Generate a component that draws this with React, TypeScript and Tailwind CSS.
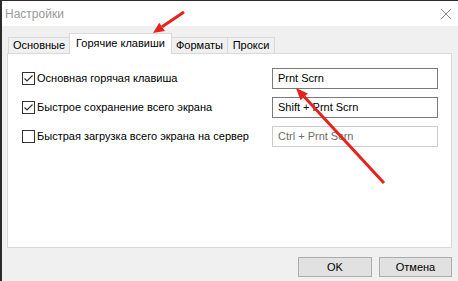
import React from "react";

const font = { fontFamily: '"Liberation Sans", Arial, sans-serif' };

const tabs = [
  { label: "Основные", w: "w-[62px]" },
  { label: "Горячие клавиши", w: "w-[103px]", active: true },
  { label: "Форматы", w: "w-[57px]" },
  { label: "Прокси", w: "w-[48px]" },
];

const rows = [
  { label: "Основная горячая клавиша", value: "Prnt Scrn", checked: true },
  { label: "Быстрое сохранение всего экрана", value: "Shift + Prnt Scrn", checked: true },
  { label: "Быстрая загрузка всего экрана на сервер", value: "Ctrl + Prnt Scrn", checked: false, disabled: true },
];

const Checkbox = ({ checked }: { checked: boolean }) => (
  <div className="h-[13px] w-[13px] shrink-0 border border-[#333333] bg-white">
    {checked && (
      <svg viewBox="0 0 11 11" className="h-[11px] w-[11px]">
        <path d="M1.5 5.5 L4 8 L9.5 2.5" fill="none" stroke="#333333" strokeWidth="1.2" />
      </svg>
    )}
  </div>
);

export default function App() {
  return (
    <div
      className="relative flex h-[281px] w-[458px] flex-col overflow-hidden whitespace-nowrap border-t border-l-2 border-[#2b2b2b] bg-[#f0f0f0] text-[11px] text-black"
      style={font}
    >
      {/* Title bar */}
      <div className="flex h-[25px] shrink-0 items-center justify-between bg-white pl-[3px] pr-[7px]">
        <span className="text-[12px] text-[#999999]">Настройки</span>
        <svg viewBox="0 0 10 10" className="h-[10px] w-[10px]">
          <path d="M0 0 L10 10 M10 0 L0 10" stroke="#8a8a8a" strokeWidth="1" />
        </svg>
      </div>

      {/* Tabs */}
      <div className="mt-[7px] flex h-[20px] items-end pl-[7px]">
        {tabs.map((t) =>
          t.active ? (
            <div
              key={t.label}
              className={`relative z-10 -ml-px -mb-px flex h-[21px] items-center justify-center border border-b-0 border-[#d9d9d9] bg-white pb-[2px] ${t.w}`}
            >
              {t.label}
            </div>
          ) : (
            <div
              key={t.label}
              className={`-ml-px flex h-[16px] items-center justify-center border border-b-0 border-[#d9d9d9] bg-[#f0f0f0] ${t.w}`}
            >
              {t.label}
            </div>
          )
        )}
      </div>

      {/* Panel */}
      <div className="ml-[5px] flex h-[195px] w-[445px] flex-col gap-[8px] border border-[#d9d9d9] bg-white px-[13px] pt-[14px]">
        {rows.map((r) => (
          <div key={r.label} className="flex h-[21px] items-center justify-between">
            <div className="flex items-center gap-[2px] pl-px">
              <Checkbox checked={r.checked} />
              <span>{r.label}</span>
            </div>
            <div
              className={`flex h-[21px] w-[166px] items-center border px-[5px] ${
                r.disabled ? "border-[#cccccc] text-[#6d6d6d]" : "border-[#7a7a7a]"
              }`}
            >
              {r.value}
            </div>
          </div>
        ))}
      </div>

      {/* Buttons */}
      <div className="mt-[9px] flex justify-end gap-[7px] pr-[6px]">
        <button className="h-[20px] w-[74px] border border-[#adadad] bg-[#e1e1e1]">OK</button>
        <button className="h-[20px] w-[73px] border border-[#adadad] bg-[#e1e1e1]">Отмена</button>
      </div>

      {/* Red arrows */}
      <svg className="pointer-events-none absolute -left-[2px] -top-px h-[281px] w-[458px]" viewBox="0 0 458 281">
        <line x1="184" y1="12" x2="162.1" y2="26.8" stroke="#e5221b" strokeWidth="3" />
        <polygon points="153,33 164.9,30.9 159.3,22.7" fill="#e5221b" />
        <line x1="384" y1="183" x2="304.2" y2="96.8" stroke="#e5221b" strokeWidth="3" />
        <polygon points="296,88 307.9,93.4 300.5,100.2" fill="#e5221b" />
      </svg>
    </div>
  );
}
